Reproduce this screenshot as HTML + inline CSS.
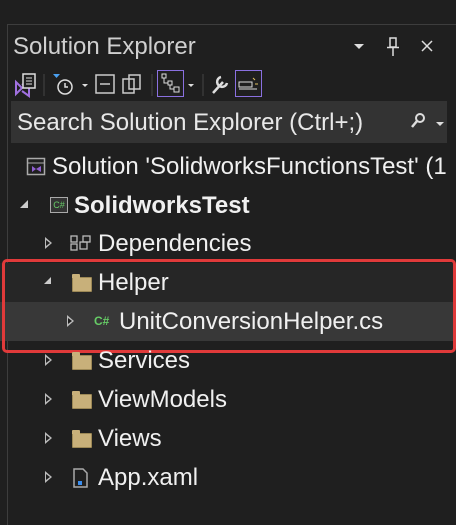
<!DOCTYPE html>
<html><head><style>
body{margin:0;width:456px;height:519px;background:#1f1f1f;overflow:hidden;font-family:"Liberation Sans",sans-serif;color:#f0f0f0;position:relative}
.abs{position:absolute}
.row{position:absolute;left:0;width:456px;height:39px;font-size:24px;line-height:39px;white-space:nowrap}
.tri{position:absolute;width:0;height:0}
.tro{border-left:7px solid #bbb;border-top:6px solid transparent;border-bottom:6px solid transparent;top:13px}
.tro::after{content:"";position:absolute;left:-6px;top:-3px;border-left:4px solid #1f1f1f;border-top:3px solid transparent;border-bottom:3px solid transparent}
.fold{position:absolute;width:18px;height:13px;background:#c8b07a;border:1px solid #9c8856;border-radius:1px;top:14px}
.fold::before{content:"";position:absolute;left:-1px;top:-4px;width:8px;height:4px;background:#c8b07a;border-radius:1px 1px 0 0}
</style></head><body>
<div class="abs" style="left:7px;top:24px;width:460px;height:500px;border-left:1px solid #3d3d3d;border-top:1px solid #3d3d3d"></div>
<div class="abs" style="left:13px;top:33px;font-size:24px;color:#cfcfcf">Solution Explorer</div>
<div class="abs" style="left:354px;top:44px;border-top:5px solid #ddd;border-left:5px solid transparent;border-right:5px solid transparent"></div>
<svg class="abs" style="left:386px;top:37px" width="14" height="20"><rect x="4" y="1" width="6" height="9" fill="none" stroke="#ddd" stroke-width="1.5"/><line x1="1" y1="10.5" x2="13" y2="10.5" stroke="#ddd" stroke-width="1.5"/><line x1="7" y1="11" x2="7" y2="19" stroke="#ddd" stroke-width="1.5"/></svg>
<svg class="abs" style="left:421px;top:40px" width="12" height="12"><path d="M1 1L11 11M11 1L1 11" stroke="#ddd" stroke-width="1.5"/></svg>
<!-- toolbar -->
<svg class="abs" style="left:0;top:68px" width="456" height="34">
<path d="M16 14 L22 20 L16 26 Z M22 17 L29 12 V28 L22 23" stroke="#a070e0" stroke-width="2" fill="none"/>
<rect x="23" y="6" width="12" height="14" fill="#1f1f1f" stroke="#ddd" stroke-width="1.5"/><path d="M26 10h6M26 13h6M26 16h6" stroke="#ddd"/>
<line x1="44" y1="6" x2="44" y2="28" stroke="#444"/>
<path d="M53 6h7l-3.5 4z" fill="#4aa0f0"/><circle cx="65" cy="19" r="7" stroke="#ddd" stroke-width="1.5" fill="none"/><path d="M65 15v4h3" stroke="#ddd" fill="none" stroke-width="1.5"/>
<path d="M82 16h6l-3 3z" fill="#ddd"/>
<rect x="96" y="7" width="18" height="18" fill="none" stroke="#ccc" stroke-width="1.5"/><line x1="100" y1="16" x2="110" y2="16" stroke="#ccc" stroke-width="1.5"/>
<rect x="123" y="11" width="11" height="14" fill="none" stroke="#ccc" stroke-width="1.5"/><rect x="129" y="7" width="11" height="14" fill="none" stroke="#ccc" stroke-width="1.5"/>
<line x1="152" y1="6" x2="152" y2="28" stroke="#444"/>
<rect x="157.5" y="2.5" width="26" height="26" fill="none" stroke="#8a70e0"/>
<rect x="162" y="6" width="4" height="4" fill="none" stroke="#ddd"/><rect x="168" y="13" width="4" height="4" fill="none" stroke="#ddd"/><rect x="174" y="19" width="5" height="5" fill="none" stroke="#ddd"/><path d="M164 10v5h4M170 17v4h4" stroke="#ddd" fill="none"/>
<path d="M188 16h6l-3 3z" fill="#ddd"/>
<line x1="203" y1="6" x2="203" y2="28" stroke="#444"/>
<path d="M213 25 L223 14 M221 9a5 5 0 1 0 6 6" stroke="#ddd" stroke-width="2.5" fill="none"/>
<rect x="235.5" y="2.5" width="26" height="26" fill="none" stroke="#8a70e0"/>
<rect x="239" y="14" width="13" height="5" fill="none" stroke="#ddd"/><line x1="239" y1="21" x2="257" y2="21" stroke="#ddd"/><path d="M253 10l2 2M255 16h3" stroke="#e0c060"/>
</svg>
<div class="abs" style="left:11px;top:101px;width:436px;height:42px;background:#333"></div>
<div class="abs" style="left:17px;top:109px;font-size:24px;color:#e8e8e8">Search Solution Explorer (Ctrl+;)</div>
<svg class="abs" style="left:410px;top:112px" width="16" height="18"><circle cx="10" cy="6" r="4" fill="none" stroke="#ddd" stroke-width="2"/><path d="M7 9L2 15" stroke="#ddd" stroke-width="2.5"/></svg>
<div class="abs" style="left:436px;top:122px;border-top:4px solid #ddd;border-left:4px solid transparent;border-right:4px solid transparent"></div>
<!-- tree -->
<div class="row" style="top:147px"><svg class="abs" style="left:26px;top:10px" width="20" height="20"><rect x="1.5" y="1.5" width="17" height="16" fill="none" stroke="#aaa" stroke-width="1.5"/><line x1="2" y1="6" x2="18" y2="6" stroke="#aaa"/><path d="M6 9l4 3-4 3zM10 12l5-3v6z" fill="#9060d0"/></svg><span class="abs" style="left:52px">Solution 'SolidworksFunctionsTest' (1</span></div>
<div class="row" style="top:186px"><div class="tri abs" style="left:20px;top:14px;border-bottom:8px solid #ccc;border-left:8px solid transparent"></div><div class="abs" style="left:50px;top:11px;width:16px;height:14px;border:1.5px solid #aaa;background:#333;font-size:9px;line-height:14px;color:#6c6;text-align:center">C#</div><b class="abs" style="left:74px">SolidworksTest</b></div>
<div class="row" style="top:224px"><div class="tri tro" style="left:45px"></div><svg class="abs" style="left:70px;top:11px" width="22" height="16"><rect x="1" y="1" width="6" height="6" fill="none" stroke="#bbb" stroke-width="1.3"/><rect x="1" y="9" width="6" height="6" fill="none" stroke="#bbb" stroke-width="1.3"/><rect x="13" y="1" width="7" height="6" fill="none" stroke="#bbb" stroke-width="1.3"/><rect x="10" y="7" width="7" height="7" fill="none" stroke="#bbb" stroke-width="1.3"/></svg><span class="abs" style="left:98px">Dependencies</span></div>
<div class="row" style="top:263px;background:#262626"><div class="tri abs" style="left:44px;top:14px;border-bottom:7px solid #ccc;border-left:7px solid transparent"></div><div class="fold" style="left:72px"></div><span class="abs" style="left:98px">Helper</span></div>
<div class="row" style="top:302px;background:#383838"><div class="tri tro" style="left:67px"></div><span class="abs" style="left:94px;font-size:12px;color:#6c6;font-weight:bold">C#</span><span class="abs" style="left:119px">UnitConversionHelper.cs</span></div>
<div class="abs" style="left:2px;top:259px;width:448px;height:88px;border:3px solid #e03a3a;border-radius:5px"></div>
<div class="row" style="top:341px"><div class="tri tro" style="left:45px"></div><div class="fold" style="left:72px"></div><span class="abs" style="left:98px">Services</span></div>
<div class="row" style="top:380px"><div class="tri tro" style="left:45px"></div><div class="fold" style="left:72px"></div><span class="abs" style="left:98px">ViewModels</span></div>
<div class="row" style="top:419px"><div class="tri tro" style="left:45px"></div><div class="fold" style="left:72px"></div><span class="abs" style="left:98px">Views</span></div>
<div class="row" style="top:458px"><div class="tri tro" style="left:45px"></div><svg class="abs" style="left:70px;top:9px" width="20" height="22"><path d="M4 2h9l4 4v14h-13z" fill="none" stroke="#aaa" stroke-width="1.5"/><rect x="8" y="14" width="4" height="4" fill="#3a8ef0"/></svg><span class="abs" style="left:98px">App.xaml</span></div>
</body></html>
